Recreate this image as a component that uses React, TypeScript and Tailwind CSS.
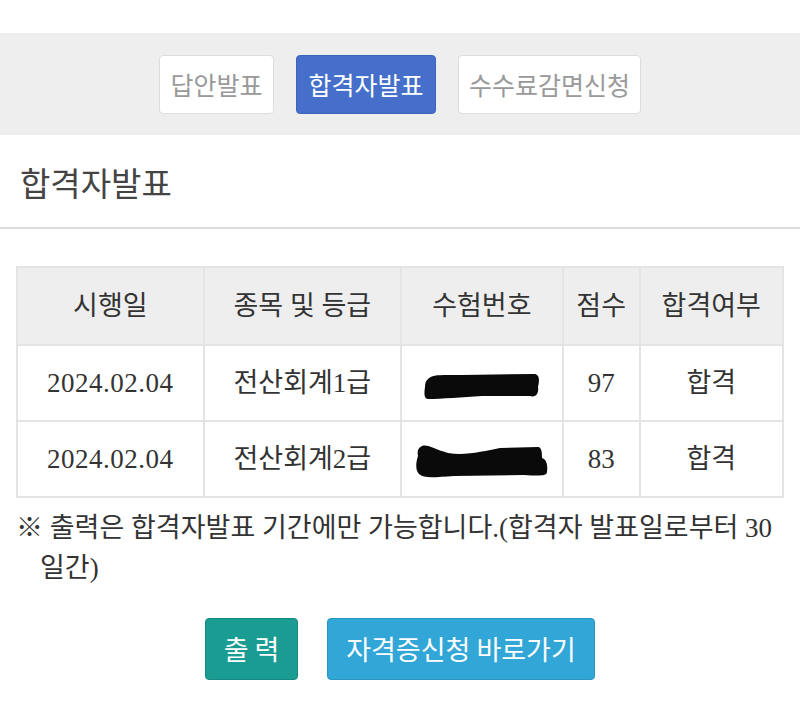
import React from "react";

const ROWS = [
  { date: "2024.02.04", subject: "전산회계1급", score: "97", result: "합격", mark: 1 },
  { date: "2024.02.04", subject: "전산회계2급", score: "83", result: "합격", mark: 2 },
];

const Redact = ({ kind }: { kind: number }) =>
  kind === 1 ? (
    <svg width="120" height="30" viewBox="0 0 120 30" className="inline-block align-middle">
      <path
        d="M6 8 C10 3 20 4 40 4 L112 3 C117 3 118 8 116 16 C117 22 114 27 108 25 L60 25 C40 26 20 28 6 28 C2 28 2 22 3 16 C3 12 4 10 6 8 Z"
        fill="#0a0a0a"
      />
    </svg>
  ) : (
    <svg width="136" height="38" viewBox="0 0 136 38" className="inline-block align-middle">
      <path
        d="M8 4 C14 2 22 8 34 11 C52 14 70 9 86 6 L124 5 C128 5 128 12 128 16 C132 17 134 22 133 30 C133 34 126 34 110 33 L40 34 C22 35 10 37 5 32 C1 28 2 20 4 14 C3 9 4 6 8 4 Z"
        fill="#0a0a0a"
      />
    </svg>
  );

export default function App() {
  return (
    <div className="w-[800px] h-[708px] bg-white overflow-hidden font-['Liberation_Serif','Noto_Sans_CJK_KR',serif] text-[#333]">
      <div className="h-[33px]" />

      {/* tabs */}
      <div className="bg-[#eeeeee] h-[102px] flex items-center justify-center gap-[22px] pt-px font-['Noto_Sans_CJK_KR',sans-serif] text-[25px]">
        <button className="h-[59px] w-[115px] bg-white border border-[#dddddd] rounded-[4px] text-[#999]">
          답안발표
        </button>
        <button className="h-[59px] w-[140px] bg-[#456fcb] border border-[#3d64bb] rounded-[4px] text-white">
          합격자발표
        </button>
        <button className="h-[59px] w-[183px] bg-white border border-[#dddddd] rounded-[4px] text-[#999]">
          수수료감면신청
        </button>
      </div>

      {/* title */}
      <div className="h-[94px] flex items-center px-5 pt-1 border-b-2 border-[#dddddd] font-['Noto_Sans_CJK_KR',sans-serif] text-[33px] text-[#444]">
        합격자발표
      </div>

      <div className="px-4 pt-[37px]">
        <table className="w-[768px] border-collapse text-center text-[27px]">
          <thead>
            <tr className="bg-[#eeeeee] h-[78px]">
              <th className="w-[187px] border-2 border-[#e4e4e4] font-normal">시행일</th>
              <th className="w-[198px] border-2 border-[#e4e4e4] font-normal">종목 및 등급</th>
              <th className="w-[162px] border-2 border-[#e4e4e4] font-normal">수험번호</th>
              <th className="w-[77px] border-2 border-[#e4e4e4] font-normal">점수</th>
              <th className="w-[144px] border-2 border-[#e4e4e4] font-normal">합격여부</th>
            </tr>
          </thead>
          <tbody>
            {ROWS.map((r, i) => (
              <tr key={i} className="h-[76px]">
                <td className="border-2 border-[#e4e4e4] tracking-[0.5px]">{r.date}</td>
                <td className="border-2 border-[#e4e4e4]">{r.subject}</td>
                <td className="border-2 border-[#e4e4e4]">
                  <Redact kind={r.mark} />
                </td>
                <td className="border-2 border-[#e4e4e4]">{r.score}</td>
                <td className="border-2 border-[#e4e4e4]">{r.result}</td>
              </tr>
            ))}
          </tbody>
        </table>

        <p className="mt-[10px] pl-6 -indent-6 text-[27px] leading-[40px] text-[#333]">
          ※ 출력은 합격자발표 기간에만 가능합니다.(합격자 발표일로부터 30 일간)
        </p>

        <div className="mt-[30px] flex justify-center gap-[29px] font-['Noto_Sans_CJK_KR',sans-serif] text-[27px] text-white">
          <button className="h-[62px] w-[93px] bg-[#1a9c93] border border-[#168a82] rounded-[4px]">
            출 력
          </button>
          <button className="h-[62px] w-[268px] bg-[#31a6d7] border border-[#2b95c2] rounded-[4px]">
            자격증신청 바로가기
          </button>
        </div>
      </div>
    </div>
  );
}
